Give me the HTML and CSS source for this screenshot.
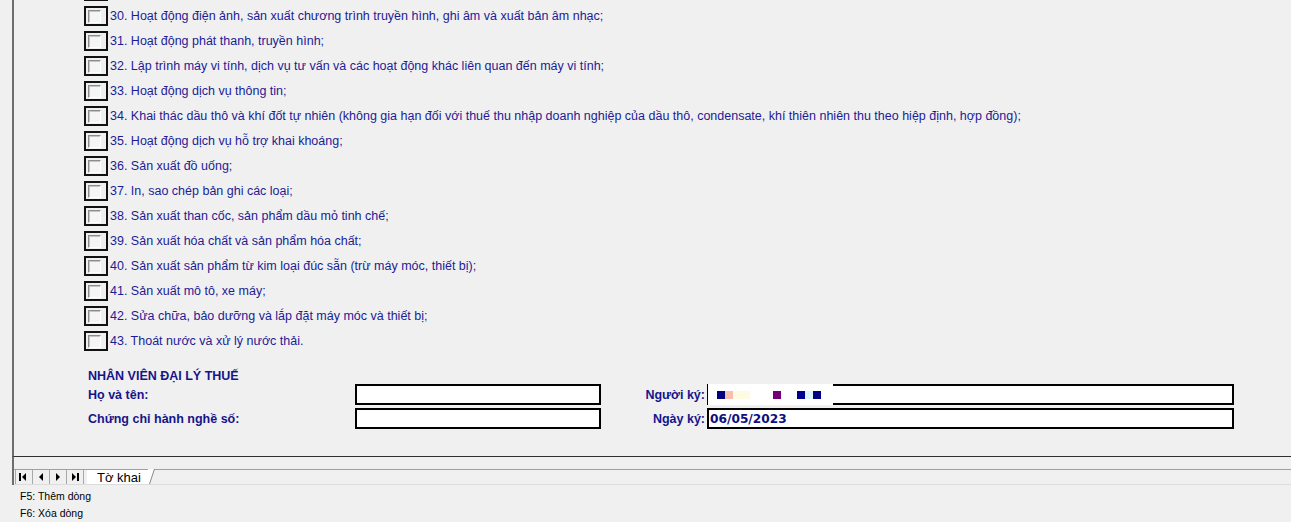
FILE: index.html
```html
<!DOCTYPE html>
<html lang="vi">
<head>
    <meta charset="UTF-8">
    <meta name="viewport" content="width=device-width, initial-scale=1.0">
    <title>Tờ khai</title>
    <link rel="stylesheet" href="styles.css">
</head>
<body>
    <div class="sheet">
        <div class="sector-list">
            <div class="sector"><span class="check-frame"><span class="check"></span></span></div>
            <div class="sector"><span class="check-frame"><span class="check"></span></span><span class="sector-text">30. Hoạt động điện ảnh, sản xuất chương trình truyền hình, ghi âm và xuất bản âm nhạc;</span></div>
            <div class="sector"><span class="check-frame"><span class="check"></span></span><span class="sector-text">31. Hoạt động phát thanh, truyền hình;</span></div>
            <div class="sector"><span class="check-frame"><span class="check"></span></span><span class="sector-text">32. Lập trình máy vi tính, dịch vụ tư vấn và các hoạt động khác liên quan đến máy vi tính;</span></div>
            <div class="sector"><span class="check-frame"><span class="check"></span></span><span class="sector-text">33. Hoạt động dịch vụ thông tin;</span></div>
            <div class="sector"><span class="check-frame"><span class="check"></span></span><span class="sector-text">34. Khai thác dầu thô và khí đốt tự nhiên (không gia hạn đối với thuế thu nhập doanh nghiệp của dầu thô, condensate, khí thiên nhiên thu theo hiệp định, hợp đồng);</span></div>
            <div class="sector"><span class="check-frame"><span class="check"></span></span><span class="sector-text">35. Hoạt động dịch vụ hỗ trợ khai khoáng;</span></div>
            <div class="sector"><span class="check-frame"><span class="check"></span></span><span class="sector-text">36. Sản xuất đồ uống;</span></div>
            <div class="sector"><span class="check-frame"><span class="check"></span></span><span class="sector-text">37. In, sao chép bản ghi các loại;</span></div>
            <div class="sector"><span class="check-frame"><span class="check"></span></span><span class="sector-text">38. Sản xuất than cốc, sản phẩm dầu mỏ tinh chế;</span></div>
            <div class="sector"><span class="check-frame"><span class="check"></span></span><span class="sector-text">39. Sản xuất hóa chất và sản phẩm hóa chất;</span></div>
            <div class="sector"><span class="check-frame"><span class="check"></span></span><span class="sector-text">40. Sản xuất sản phẩm từ kim loại đúc sẵn (trừ máy móc, thiết bị);</span></div>
            <div class="sector"><span class="check-frame"><span class="check"></span></span><span class="sector-text">41. Sản xuất mô tô, xe máy;</span></div>
            <div class="sector"><span class="check-frame"><span class="check"></span></span><span class="sector-text">42. Sửa chữa, bảo dưỡng và lắp đặt máy móc và thiết bị;</span></div>
            <div class="sector"><span class="check-frame"><span class="check"></span></span><span class="sector-text">43. Thoát nước và xử lý nước thải.</span></div>
        </div>

        <div class="agent-title">NHÂN VIÊN ĐẠI LÝ THUẾ</div>
        <div class="agent-form">
            <div class="label">Họ và tên:</div>
            <div class="field"></div>
            <div class="label label-right">Người ký:</div>
            <div class="field signer">
                <span class="signer-mask">
                    <svg width="125" height="21" viewBox="0 0 125 21">
                        <rect x="9" y="7" width="8" height="8" fill="#000080"/>
                        <rect x="17" y="7" width="8" height="8" fill="#f9bfae"/>
                        <rect x="25" y="7" width="17" height="8" fill="#fffae2"/>
                        <rect x="65" y="7" width="8" height="8" fill="#720078"/>
                        <rect x="89" y="7" width="8" height="8" fill="#000090"/>
                        <rect x="97" y="7" width="8" height="8" fill="#dcf6f8"/>
                        <rect x="105" y="7" width="8" height="8" fill="#000080"/>
                    </svg>
                </span>
            </div>
            <div class="label">Chứng chỉ hành nghề số:</div>
            <div class="field"></div>
            <div class="label label-right">Ngày ký:</div>
            <div class="field date">06/05/2023</div>
        </div>
    </div>

    <div class="tabbar">
        <div class="tab-strip">
            <span class="nav-btn">
                <svg width="16" height="14" viewBox="0 0 16 14"><rect x="3" y="3" width="2" height="8" fill="#000"/><path d="M10 3 L6 7 L10 11 Z" fill="#000"/></svg>
            </span>
            <span class="nav-btn">
                <svg width="16" height="14" viewBox="0 0 16 14"><path d="M10 3 L6 7 L10 11 Z" fill="#000"/></svg>
            </span>
            <span class="nav-btn">
                <svg width="16" height="14" viewBox="0 0 16 14"><path d="M6 3 L10 7 L6 11 Z" fill="#000"/></svg>
            </span>
            <span class="nav-btn">
                <svg width="16" height="14" viewBox="0 0 16 14"><path d="M5 3 L9 7 L5 11 Z" fill="#000"/><rect x="10" y="3" width="2" height="8" fill="#000"/></svg>
            </span>
            <span class="sheet-tab">Tờ khai</span>
            <svg class="tab-edge" width="7" height="15" viewBox="0 0 7 15"><path d="M0 0 L6 0 L1 15 L0 15 Z" fill="#fff"/><path d="M6.5 0 L1.5 15" stroke="#8a8a8a" stroke-width="1"/></svg>
        </div>
    </div>

    <div class="hints">
        <div>F5: Thêm dòng</div>
        <div>F6: Xóa dòng</div>
    </div>
</body>
</html>
```

FILE: styles.css
```css
body {
    margin: 0;
    width: 1291px;
    height: 522px;
    overflow: hidden;
    background-color: #f0f0f0;
    font-family: 'Liberation Sans', Arial, sans-serif;
}

.sheet {
    margin-left: 12px;
    height: 456px;
    border-left: 2px solid #6e6e6e;
    border-bottom: 1px solid #303030;
    overflow: hidden;
}

.sector-list {
    margin-top: -21px;
}

.sector {
    display: flex;
    align-items: flex-start;
    height: 25px;
    padding-left: 70px;
}

.check-frame {
    display: flex;
    align-items: center;
    box-sizing: border-box;
    width: 24px;
    height: 20px;
    margin-top: 2px;
    padding-left: 2px;
    border: 2px solid #111;
    background-color: #f0f0f0;
}

.check {
    box-sizing: border-box;
    width: 13px;
    height: 13px;
    border: 1px solid;
    border-color: #8c8c8c #ffffff #ffffff #8c8c8c;
    box-shadow: inset 1px 1px 0 #c4c4c4;
    background-color: #f5f5f5;
}

.sector-text {
    margin-left: 2px;
    line-height: 24px;
    font-size: 12.5px;
    color: #1c1c96;
    white-space: nowrap;
}

.agent-title {
    margin-top: 14px;
    padding-left: 74px;
    line-height: 16px;
    font-size: 12.5px;
    font-weight: bold;
    color: #15158a;
}

.agent-form {
    display: grid;
    grid-template-columns: 267px 246px 106px 527px;
    grid-auto-rows: 21px;
    row-gap: 3px;
    padding-left: 74px;
}

.label {
    display: flex;
    align-items: center;
    font-size: 12.5px;
    font-weight: bold;
    color: #15158a;
}

.label-right {
    justify-content: flex-end;
    padding-right: 2px;
}

.field {
    position: relative;
    box-sizing: border-box;
    border: 2px solid #000;
    background-color: #fff;
}

.signer-mask {
    position: absolute;
    top: -2px;
    left: -1px;
    display: block;
    width: 125px;
    height: 21px;
    background-color: #fff;
}

.signer-mask svg {
    display: block;
}

.date {
    display: flex;
    align-items: center;
    padding-left: 1px;
    font-family: 'DejaVu Sans', Verdana, sans-serif;
    font-size: 12.2px;
    font-weight: bold;
    color: #0e0e80;
}

.tabbar {
    margin-left: 12px;
    padding-top: 12px;
    border-left: 2px solid #6e6e6e;
}

.tab-strip {
    display: flex;
    height: 14px;
    border-top: 1px solid #a0a0a0;
    border-bottom: 1px solid #dcdcdc;
}

.nav-btn {
    display: block;
    height: 14px;
    border-left: 1px solid #a8a8a8;
}

.nav-btn svg {
    display: block;
}

.nav-btn:nth-child(1) {
    margin-left: 1px;
}

.nav-btn:nth-child(4) {
    border-right: 1px solid #a8a8a8;
}

.sheet-tab {
    display: block;
    margin-left: 3px;
    padding: 0 7px 0 10px;
    height: 14px;
    line-height: 15px;
    font-size: 13px;
    color: #000;
    background-color: #fff;
}

.tab-edge {
    display: block;
    margin-top: -1px;
}

.hints {
    padding: 3px 0 0 20px;
    font-size: 10.5px;
    line-height: 17px;
    color: #000;
}
```
